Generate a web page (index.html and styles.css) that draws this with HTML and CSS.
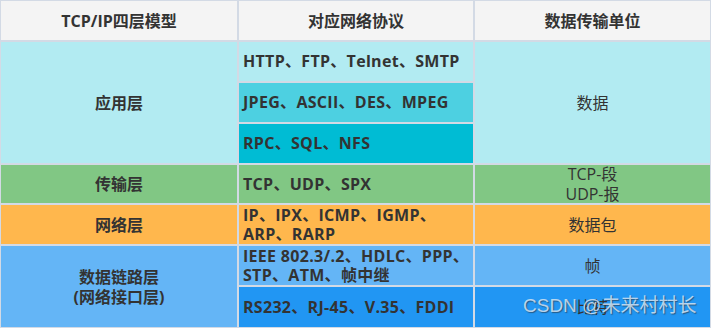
FILE: index.html
```html
<!DOCTYPE html>
<html lang="zh-CN">
<head>
<meta charset="utf-8">
<title>TCP/IP四层模型</title>
<link rel="stylesheet" href="styles.css">
</head>
<body>
<div class="wrap">
  <div class="grid">
    <div class="cell head">TCP/IP四层模型</div>
    <div class="cell head">对应网络协议</div>
    <div class="cell head">数据传输单位</div>

    <div class="cell layer app-span c-cyan1">应用层</div>
    <div class="cell proto c-cyan1">HTTP、FTP、Telnet、SMTP</div>
    <div class="cell unit app-span c-cyan1">数据</div>
    <div class="cell proto c-cyan3">JPEG、ASCII、DES、MPEG</div>
    <div class="cell proto c-cyan5">RPC、SQL、NFS</div>

    <div class="cell layer c-green">传输层</div>
    <div class="cell proto c-green">TCP、UDP、SPX</div>
    <div class="cell unit c-green">TCP-段<br>UDP-报</div>

    <div class="cell layer c-orange">网络层</div>
    <div class="cell proto c-orange">IP、IPX、ICMP、IGMP、<br>ARP、RARP</div>
    <div class="cell unit c-orange">数据包</div>

    <div class="cell layer link-span c-blue3">数据链路层<br>(网络接口层)</div>
    <div class="cell proto c-blue3">IEEE 802.3/.2、HDLC、PPP、<br>STP、ATM、帧中继</div>
    <div class="cell unit c-blue3">帧</div>
    <div class="cell proto c-blue5">RS232、RJ-45、V.35、FDDI</div>
    <div class="cell unit c-blue5">比特</div>
  </div>
  <div class="watermark">CSDN @未来村村长</div>
</div>
</body>
</html>
```
FILE: styles.css
```css
html, body {
  margin: 0;
  padding: 0;
  background: #ffffff;
}

.wrap {
  position: relative;
  width: 711px;
  height: 328px;
}

.grid {
  display: grid;
  grid-template-columns: 236px 234px 235px;
  grid-template-rows: 39px 39px 39px 39px 38px 39px 39px 40px;
  gap: 2px;
  padding: 1px;
  background: #d3dae5;
  width: 711px;
  height: 328px;
  box-sizing: border-box;
  font-family: "Open Sans", "Noto Sans CJK SC", sans-serif;
  font-size: 16px;
  color: #333333;
}

.cell {
  display: flex;
  align-items: center;
  line-height: 20px;
}

.head {
  background: #f4f4f4;
  justify-content: center;
  font-weight: 700;
}

.layer {
  grid-column: 1;
  justify-content: center;
  text-align: center;
  font-weight: 700;
}

.proto {
  grid-column: 2;
  padding-left: 4px;
  font-weight: 700;
  line-height: 19px;
  letter-spacing: 0.3px;
}

.unit {
  grid-column: 3;
  justify-content: center;
  text-align: center;
  font-weight: 400;
}

.app-span { grid-row: 2 / span 3; }
.link-span { grid-row: 7 / span 2; }

.c-cyan1 { background: #b2ebf2; }
.c-cyan3 { background: #4dd0e1; }
.c-cyan5 { background: #00bcd4; }
.c-green { background: #81c784; }
.c-orange { background: #ffb74d; }
.c-blue3 { background: #64b5f6; }
.c-blue5 { background: #2196f3; }

.watermark {
  position: absolute;
  left: 523px;
  top: 295px;
  font-family: "Liberation Sans", "Noto Sans CJK SC", sans-serif;
  font-size: 19px;
  line-height: 22px;
  color: rgba(225, 235, 245, 0.8);
  text-shadow: 1px 1px 1px rgba(40, 50, 60, 0.6);
  white-space: nowrap;
}
```
